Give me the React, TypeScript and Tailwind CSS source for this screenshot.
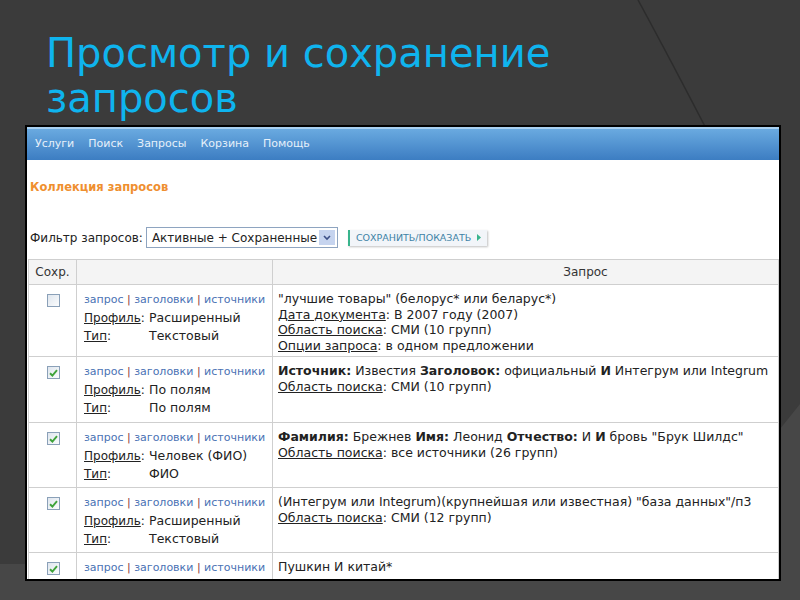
import type { ReactNode } from "react";

type Row = {
  checked: boolean;
  profile?: string;
  type?: string;
  query: ReactNode[];
  height: string;
};

const Label = ({ children }: { children: ReactNode }) => (
  <>
    <span className="underline">{children}</span>:{" "}
  </>
);

const rows: Row[] = [
  {
    checked: false,
    profile: "Расширенный",
    type: "Текстовый",
    height: "h-[72px]",
    query: [
      <>"лучшие товары" (белорус* или беларус*)</>,
      <>
        <Label>Дата документа</Label>В 2007 году (2007)
      </>,
      <>
        <Label>Область поиска</Label>СМИ (10 групп)
      </>,
      <>
        <Label>Опции запроса</Label>в одном предложении
      </>,
    ],
  },
  {
    checked: true,
    profile: "По полям",
    type: "По полям",
    height: "h-[66px]",
    query: [
      <>
        <b>Источник:</b> Известия <b>Заголовок:</b> официальный <b>И</b> Интегрум или Integrum
      </>,
      <>
        <Label>Область поиска</Label>СМИ (10 групп)
      </>,
    ],
  },
  {
    checked: true,
    profile: "Человек (ФИО)",
    type: "ФИО",
    height: "h-[65px]",
    query: [
      <>
        <b>Фамилия:</b> Брежнев <b>Имя:</b> Леонид <b>Отчество:</b> И <b>И</b> бровь "Брук Шилдс"
      </>,
      <>
        <Label>Область поиска</Label>все источники (26 групп)
      </>,
    ],
  },
  {
    checked: true,
    profile: "Расширенный",
    type: "Текстовый",
    height: "h-[65px]",
    query: [
      <>(Интегрум или Integrum)(крупнейшая или известная) "база данных"/п3</>,
      <>
        <Label>Область поиска</Label>СМИ (12 групп)
      </>,
    ],
  },
  {
    // last row is cut off by the screenshot edge
    checked: true,
    height: "h-[40px]",
    query: [<>Пушкин И китай*</>],
  },
];

function Checkbox({ checked }: { checked: boolean }) {
  return (
    <div className="flex h-[13px] w-[13px] items-center justify-center border border-[#8aa0b8] bg-gradient-to-br from-[#dfe6ee] to-[#fbfcfd]">
      {checked && (
        <svg width="9" height="8" viewBox="0 0 9 8">
          <path d="M1 4.2 L3.4 6.5 L8 1.2" fill="none" stroke="#3fa33a" strokeWidth="1.9" />
        </svg>
      )}
    </div>
  );
}

export default function App() {
  return (
    <div className="relative h-[600px] w-[800px] overflow-hidden bg-[#3b3b3b]">
      {/* slide background shapes */}
      <svg className="absolute inset-0" width="800" height="600" viewBox="0 0 800 600">
        <polygon points="0,564 672,564 800,404 800,600 0,600" fill="#474747" />
        <path d="M638 0 Q 668 55 712 140" fill="none" stroke="#2c2c2c" strokeWidth="1.5" />
      </svg>

      <div className="relative pl-[46px] pt-[31px]">
        <h1 className="font-['DejaVu_Sans',sans-serif] text-[40px] leading-[45px] text-[#0fb4ee]">
          Просмотр и сохранение
          <br />
          запросов
        </h1>
      </div>

      <div className="absolute left-[25px] top-[125px] h-[456px] w-[756px] overflow-hidden border-2 border-black bg-white font-['DejaVu_Sans',Verdana,sans-serif] text-[#222]">
        {/* nav */}
        <div className="flex h-[33px] items-center gap-[14px] border-t-2 border-[#a9d0f0] bg-gradient-to-b from-[#6aaae0] to-[#3c7dc2] pl-[8px] text-[11px] text-[#e6f0fa]">
          <span>Услуги</span>
          <span>Поиск</span>
          <span>Запросы</span>
          <span>Корзина</span>
          <span>Помощь</span>
        </div>

        <div className="pl-[3px] pt-[19px] text-[11.5px] font-bold text-[#ef8f2f]">Коллекция запросов</div>

        <div className="mt-[31px] flex items-center pl-[3px]">
          <span className="text-[12px]">Фильтр запросов:</span>
          <div className="ml-[3px] flex h-[21px] w-[192px] items-center justify-between border border-[#8ea4c0] pl-[5px] pr-[2px] text-[12px]">
            <span>Активные + Сохраненные</span>
            <div className="flex h-[15px] w-[16px] items-center justify-center bg-[#c6d4ef]">
              <svg width="8" height="6" viewBox="0 0 8 6">
                <path d="M1 1 L4 4 L7 1" fill="none" stroke="#3c4f86" strokeWidth="1.6" />
              </svg>
            </div>
          </div>
          <div className="ml-[10px] flex h-[16px] items-center gap-[6px] border-l-2 border-[#38b48c] bg-[#f2f5f9] pl-[6px] pr-[6px] text-[9.5px] text-[#3d82a6] shadow-[1px_1px_2px_rgba(0,0,0,0.25)]">
            <span>СОХРАНИТЬ/ПОКАЗАТЬ</span>
            <svg width="4" height="7" viewBox="0 0 4 7">
              <path d="M0 0 L4 3.5 L0 7Z" fill="#38b48c" />
            </svg>
          </div>
        </div>

        <table className="mt-[11px] ml-[1px] w-[751px] border-collapse">
          <thead>
            <tr className="h-[25px] bg-[#f4f4f4] text-[12px] text-[#333]">
              <th className="w-[48px] border border-[#cfcfcf] text-center font-normal">Сохр.</th>
              <th className="w-[196px] border border-[#cfcfcf] font-normal"></th>
              <th className="border border-[#cfcfcf] pl-[120px] text-center font-normal">Запрос</th>
            </tr>
          </thead>
          <tbody>
            {rows.map((r, i) => (
              <tr key={i} className={r.height}>
                <td className="border border-[#cfcfcf] pt-[9px] align-top">
                  <div className="flex justify-center pl-[1px]">
                    <Checkbox checked={r.checked} />
                  </div>
                </td>
                <td className="border border-[#cfcfcf] pl-[7px] pt-[6px] align-top text-[11px] leading-[18px]">
                  <div className="text-[#4a72b4]">
                    запрос <span className="text-[#8a3b3b]">|</span> заголовки{" "}
                    <span className="text-[#8a3b3b]">|</span> источники
                  </div>
                  {r.profile && (
                    <div className="flex text-[12px]">
                      <span className="w-[65px]">
                        <span className="underline">Профиль</span>:
                      </span>
                      <span className="text-[12.5px]">{r.profile}</span>
                    </div>
                  )}
                  {r.type && (
                    <div className="flex text-[12px]">
                      <span className="w-[65px]">
                        <span className="underline">Тип</span>:
                      </span>
                      <span className="text-[12.5px]">{r.type}</span>
                    </div>
                  )}
                </td>
                <td className="border border-[#cfcfcf] pl-[5px] pt-[6px] align-top text-[12.5px] leading-[15.5px]">
                  {r.query.map((q, j) => (
                    <div key={j} className="whitespace-nowrap">
                      {q}
                    </div>
                  ))}
                </td>
              </tr>
            ))}
          </tbody>
        </table>
      </div>
    </div>
  );
}
